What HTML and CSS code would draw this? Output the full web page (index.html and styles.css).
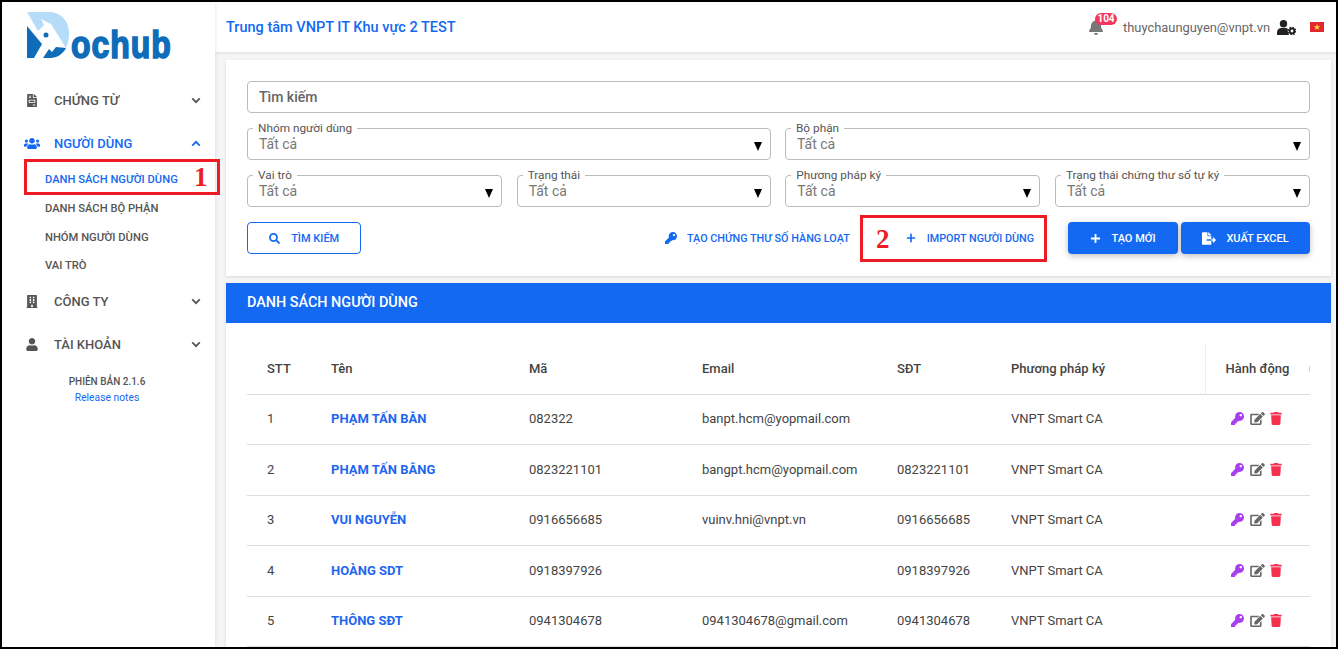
FILE: index.html
```html
<!DOCTYPE html>
<html lang="en">
<head>
  <meta charset="UTF-8" />
  <title>Dochub - Danh sách người dùng</title>
  <link rel="stylesheet" href="styles.css">
</head>
<body>
<svg class="sprite" xmlns="http://www.w3.org/2000/svg">
  <symbol id="i-key" viewBox="0 0 512 512"><path d="M512 176.001C512 273.203 433.202 352 336 352c-11.22 0-22.19-1.062-32.827-3.069l-24.012 27.014A23.999 23.999 0 0 1 261.223 384H224v40c0 13.255-10.745 24-24 24h-40v40c0 13.255-10.745 24-24 24H24c-13.255 0-24-10.745-24-24v-78.059c0-6.365 2.529-12.47 7.029-16.971l161.802-161.802C163.108 213.814 160 195.271 160 176 160 78.798 238.797.001 335.999 0 433.488-.001 512 78.511 512 176.001zM336 128c0 26.51 21.49 48 48 48s48-21.49 48-48-21.49-48-48-48-48 21.49-48 48z"/></symbol>
  <symbol id="i-edit" viewBox="0 0 576 512"><path d="M402.6 83.2l90.2 90.2c3.8 3.8 3.8 10 0 13.8L274.4 405.6l-92.8 10.3c-12.4 1.4-22.9-9.1-21.5-21.5l10.3-92.8L388.8 83.2c3.8-3.8 10-3.8 13.8 0zm162-22.9l-48.8-48.8c-15.2-15.2-39.9-15.2-55.2 0l-35.4 35.4c-3.8 3.8-3.8 10 0 13.8l90.2 90.2c3.8 3.8 10 3.8 13.8 0l35.4-35.4c15.2-15.3 15.2-40 0-55.2zM384 346.2V448H64V128h229.8c3.2 0 6.2-1.3 8.5-3.5l40-40c7.6-7.6 2.2-20.5-8.5-20.5H48C21.5 64 0 85.5 0 112v352c0 26.5 21.5 48 48 48h352c26.5 0 48-21.5 48-48V306.2c0-10.7-12.9-16-20.5-8.5l-40 40c-2.2 2.3-3.5 5.3-3.5 8.5z"/></symbol>
  <symbol id="i-trash" viewBox="0 0 448 512"><path d="M432 32H312l-9.4-18.7A24 24 0 0 0 281.1 0H166.8a23.72 23.72 0 0 0-21.4 13.3L136 32H16A16 16 0 0 0 0 48v32a16 16 0 0 0 16 16h416a16 16 0 0 0 16-16V48a16 16 0 0 0-16-16zM53.2 467a48 48 0 0 0 47.9 45h245.8a48 48 0 0 0 47.9-45L416 128H32z"/></symbol>
  <symbol id="i-chevron" viewBox="0 0 12 8"><path d="M1.5 1.5 6 6l4.5-4.5" fill="none" stroke="currentColor" stroke-width="2.2"/></symbol>
  <symbol id="i-plus" viewBox="0 0 12 12"><path d="M6 1v10M1 6h10" fill="none" stroke="currentColor" stroke-width="2"/></symbol>
</svg>

<div class="frame">
  <aside class="sidebar">
    <div class="logo">
      <svg width="170" height="64" viewBox="24 8 170 64">
        <path fill="#b5dcf8" d="M27 12h22c13 0 20 10 20 21 0 6-1 11-3 15L51 24l-10-5 3 6-6 6z"/>
        <path fill="#0f6cb8" d="M27 26l15 18-8 14h-7z"/>
        <path fill="#0f6cb8" d="M43 58l6-9 3 3 4-5 10 1c-3 6-9 10-16 10z"/>
        <circle cx="46" cy="35" r="2.500" fill="#0f6cb8"/>
        <text class="logo-text" transform="translate(71 58) scale(0.97 1.16)">ochub</text>
      </svg>
    </div>
    <nav class="menu">
      <div class="menu-item">
        <svg class="menu-icon" viewBox="0 0 384 512"><path d="M288 256H96v64h192v-64zm89-151L279.1 7c-4.5-4.5-10.6-7-17-7H256v128h128v-6.1c0-6.3-2.5-12.4-7-16.9zm-153 31V0H24C10.7 0 0 10.7 0 24v464c0 13.3 10.7 24 24 24h336c13.3 0 24-10.7 24-24V160H248c-13.2 0-24-10.8-24-24zM64 72c0-4.42 3.58-8 8-8h80c4.42 0 8 3.58 8 8v16c0 4.42-3.58 8-8 8H72c-4.42 0-8-3.58-8-8V72zm0 64c0-4.42 3.58-8 8-8h80c4.42 0 8 3.58 8 8v16c0 4.42-3.58 8-8 8H72c-4.42 0-8-3.58-8-8v-16zm256 304c0 4.42-3.58 8-8 8h-80c-4.42 0-8-3.58-8-8v-16c0-4.42 3.58-8 8-8h80c4.42 0 8 3.58 8 8v16zm0-200v96c0 8.84-7.16 16-16 16H80c-8.84 0-16-7.16-16-16v-96c0-8.84 7.16-16 16-16h224c8.84 0 16 7.16 16 16z"/></svg>
        <span>CHỨNG TỪ</span>
        <svg class="chevron"><use href="#i-chevron"/></svg>
      </div>
      <div class="menu-item active">
        <svg class="menu-icon" viewBox="0 0 640 512"><path d="M96 224c35.3 0 64-28.7 64-64s-28.7-64-64-64-64 28.700-64 64 28.700 64 64 64zm448 0c35.300 0 64-28.700 64-64s-28.700-64-64-64-64 28.700-64 64 28.700 64 64 64zm32 32h-64c-17.600 0-33.500 7.100-45.100 18.600 40.300 22.100 68.900 62 75.100 109.400h66c17.700 0 32-14.300 32-32v-32c0-35.300-28.700-64-64-64zm-256 0c61.900 0 112-50.100 112-112S381.900 32 320 32 208 82.100 208 144s50.100 112 112 112zm76.800 32h-8.300c-20.800 10-43.900 16-68.500 16s-47.600-6-68.500-16h-8.300C179.600 288 128 339.600 128 403.200V432c0 26.500 21.500 48 48 48h288c26.500 0 48-21.500 48-48v-28.800c0-63.600-51.600-115.200-115.200-115.200zm-223.700-13.400C161.500 263.100 145.600 256 128 256H64c-35.300 0-64 28.700-64 64v32c0 17.700 14.300 32 32 32h65.900c6.300-47.400 34.900-87.300 75.200-109.400z"/></svg>
        <span>NGƯỜI DÙNG</span>
        <svg class="chevron up"><use href="#i-chevron"/></svg>
      </div>
      <div class="sub-menu">
        <a class="sub-item current">DANH SÁCH NGƯỜI DÙNG</a>
        <a class="sub-item">DANH SÁCH BỘ PHẬN</a>
        <a class="sub-item">NHÓM NGƯỜI DÙNG</a>
        <a class="sub-item">VAI TRÒ</a>
      </div>
      <div class="menu-item">
        <svg class="menu-icon" viewBox="0 0 448 512"><path d="M436 480h-20V24c0-13.255-10.745-24-24-24H56C42.745 0 32 10.745 32 24v456H12c-6.627 0-12 5.373-12 12v20h448v-20c0-6.627-5.373-12-12-12zM128 76c0-6.627 5.373-12 12-12h40c6.627 0 12 5.373 12 12v40c0 6.627-5.373 12-12 12h-40c-6.627 0-12-5.373-12-12V76zm0 96c0-6.627 5.373-12 12-12h40c6.627 0 12 5.373 12 12v40c0 6.627-5.373 12-12 12h-40c-6.627 0-12-5.373-12-12v-40zm52 148h-40c-6.627 0-12-5.373-12-12v-40c0-6.627 5.373-12 12-12h40c6.627 0 12 5.373 12 12v40c0 6.627-5.373 12-12 12zm76 160h-64v-84c0-6.627 5.373-12 12-12h40c6.627 0 12 5.373 12 12v84zm64-172c0 6.627-5.373 12-12 12h-40c-6.627 0-12-5.373-12-12v-40c0-6.627 5.373-12 12-12h40c6.627 0 12 5.373 12 12v40zm0-96c0 6.627-5.373 12-12 12h-40c-6.627 0-12-5.373-12-12v-40c0-6.627 5.373-12 12-12h40c6.627 0 12 5.373 12 12v40zm0-96c0 6.627-5.373 12-12 12h-40c-6.627 0-12-5.373-12-12V76c0-6.627 5.373-12 12-12h40c6.627 0 12 5.373 12 12v40z"/></svg>
        <span>CÔNG TY</span>
        <svg class="chevron"><use href="#i-chevron"/></svg>
      </div>
      <div class="menu-item">
        <svg class="menu-icon" viewBox="0 0 448 512"><path d="M224 256c70.700 0 128-57.300 128-128S294.700 0 224 0 96 57.300 96 128s57.300 128 128 128zm89.600 32h-16.700c-22.200 10.200-46.900 16-72.900 16s-50.600-5.800-72.900-16h-16.700C60.200 288 0 348.200 0 422.400V464c0 26.500 21.500 48 48 48h352c26.500 0 48-21.500 48-48v-41.600c0-74.200-60.200-134.400-134.400-134.400z"/></svg>
        <span>TÀI KHOẢN</span>
        <svg class="chevron"><use href="#i-chevron"/></svg>
      </div>
    </nav>
    <div class="version">
      <div>PHIÊN BẢN 2.1.6</div>
      <a>Release notes</a>
    </div>
  </aside>

  <main class="main">
    <header class="topbar">
      <div class="org">Trung tâm VNPT IT Khu vực 2 TEST</div>
      <div class="user-box">
        <div class="bell">
          <svg width="14" height="16" viewBox="0 0 448 512"><path d="M224 512c35.320 0 63.970-28.650 63.970-64H160.030c0 35.350 28.650 64 63.970 64zm215.390-149.710c-19.320-20.760-55.470-51.990-55.470-154.290 0-77.700-54.480-139.900-127.940-155.160V32c0-17.670-14.320-32-31.980-32s-31.980 14.330-31.980 32v20.840C118.560 68.100 64.080 130.300 64.080 208c0 102.300-36.150 133.530-55.470 154.290-6 6.450-8.660 14.160-8.610 21.710.11 16.400 12.980 32 32.100 32h383.800c19.120 0 32-15.600 32.100-32 .05-7.550-2.610-15.270-8.610-21.710z"/></svg>
          <span class="badge">104</span>
        </div>
        <span class="email">thuychaunguyen@vnpt.vn</span>
        <svg class="user-cog" width="19" height="15" viewBox="0 0 19 15">
          <circle cx="6.500" cy="3.800" r="3.700"/>
          <path d="M0 15v-2.500C0 9.700 2 8 4.500 8h4c1 0 1.800.3 2.400.7-.3 1.800 0 4 1.100 6.300z"/>
          <circle cx="15" cy="11" r="2.400" fill="none" stroke="#222" stroke-width="2"/>
          <circle cx="15" cy="11" r="3.700" fill="none" stroke="#222" stroke-width="1.300" stroke-dasharray="1.500 1.400"/>
        </svg>
        <svg class="flag" width="14" height="10" viewBox="0 0 14 10">
          <rect width="14" height="10" fill="#e0282e"/>
          <polygon fill="#ffd83d" points="7,1.800 7.800,4.200 10.300,4.200 8.300,5.700 9,8.100 7,6.600 5,8.100 5.700,5.700 3.700,4.200 6.200,4.200"/>
        </svg>
      </div>
    </header>

    <div class="content">
      <section class="card filter">
        <div class="search-input">Tìm kiếm</div>
        <div class="field-row">
          <fieldset class="field"><legend>Nhóm người dùng</legend><span>Tất cả</span><i class="caret"></i></fieldset>
          <fieldset class="field"><legend>Bộ phận</legend><span>Tất cả</span><i class="caret"></i></fieldset>
        </div>
        <div class="field-row four">
          <fieldset class="field"><legend>Vai trò</legend><span>Tất cả</span><i class="caret"></i></fieldset>
          <fieldset class="field"><legend>Trạng thái</legend><span>Tất cả</span><i class="caret"></i></fieldset>
          <fieldset class="field"><legend>Phương pháp ký</legend><span>Tất cả</span><i class="caret"></i></fieldset>
          <fieldset class="field"><legend>Trạng thái chứng thư số tự ký</legend><span>Tất cả</span><i class="caret"></i></fieldset>
        </div>
        <div class="actions">
          <button class="btn-outline">
            <svg width="11" height="11" viewBox="0 0 512 512"><path d="M505 442.700L405.300 343c-4.500-4.500-10.600-7-17-7H372c27.600-35.300 44-79.700 44-128C416 93.100 322.900 0 208 0S0 93.100 0 208s93.100 208 208 208c48.300 0 92.700-16.400 128-44v16.300c0 6.400 2.500 12.500 7 17l99.700 99.700c9.400 9.400 24.600 9.400 33.900 0l28.300-28.300c9.400-9.400 9.400-24.600.1-34zM208 336c-70.700 0-128-57.200-128-128 0-70.700 57.200-128 128-128 70.700 0 128 57.200 128 128 0 70.700-57.200 128-128 128z"/></svg>
            TÌM KIẾM
          </button>
          <a class="btn-link key-link"><svg width="12" height="12"><use href="#i-key"/></svg>TẠO CHỨNG THƯ SỐ HÀNG LOẠT</a>
          <a class="btn-link import-link"><svg width="10" height="10"><use href="#i-plus"/></svg>IMPORT NGƯỜI DÙNG</a>
          <button class="btn-solid new-btn"><svg width="11" height="11"><use href="#i-plus"/></svg>TẠO MỚI</button>
          <button class="btn-solid">
            <svg width="14" height="13" viewBox="0 0 576 512"><path d="M384 121.900c0-6.300-2.500-12.400-7-16.900L279.100 7c-4.500-4.500-10.600-7-17-7H256v128h128zM571 308l-95.700-96.400c-10.100-10.100-27.400-3-27.400 11.300V288h-64v64h64v65.200c0 14.300 17.300 21.400 27.400 11.300L571 332c6.600-6.600 6.600-17.400 0-24zm-379 28v-32c0-8.800 7.200-16 16-16h176V160H248c-13.200 0-24-10.800-24-24V0H24C10.700 0 0 10.700 0 24v464c0 13.300 10.700 24 24 24h336c13.300 0 24-10.700 24-24V352H208c-8.800 0-16-7.200-16-16z"/></svg>
            XUẤT EXCEL
          </button>
        </div>
      </section>

      <section class="card list">
        <h2 class="list-title">DANH SÁCH NGƯỜI DÙNG</h2>
        <div class="table-wrap">
          <table class="users">
            <colgroup>
              <col class="c-stt"><col class="c-name"><col class="c-code"><col class="c-email"><col class="c-phone"><col class="c-method"><col class="c-action">
            </colgroup>
            <thead>
              <tr><th>STT</th><th>Tên</th><th>Mã</th><th>Email</th><th>SĐT</th><th>Phương pháp ký</th><th class="action-head">Hành động</th></tr>
            </thead>
            <tbody>
              <tr><td>1</td><td class="name">PHẠM TẤN BẰN</td><td>082322</td><td>banpt.hcm@yopmail.com</td><td></td><td>VNPT Smart CA</td><td><div class="row-actions"><svg class="a-key"><use href="#i-key"/></svg><svg class="a-edit"><use href="#i-edit"/></svg><svg class="a-trash"><use href="#i-trash"/></svg></div></td></tr>
              <tr><td>2</td><td class="name">PHẠM TẤN BẰNG</td><td>0823221101</td><td>bangpt.hcm@yopmail.com</td><td>0823221101</td><td>VNPT Smart CA</td><td><div class="row-actions"><svg class="a-key"><use href="#i-key"/></svg><svg class="a-edit"><use href="#i-edit"/></svg><svg class="a-trash"><use href="#i-trash"/></svg></div></td></tr>
              <tr><td>3</td><td class="name">VUI NGUYỄN</td><td>0916656685</td><td>vuinv.hni@vnpt.vn</td><td>0916656685</td><td>VNPT Smart CA</td><td><div class="row-actions"><svg class="a-key"><use href="#i-key"/></svg><svg class="a-edit"><use href="#i-edit"/></svg><svg class="a-trash"><use href="#i-trash"/></svg></div></td></tr>
              <tr><td>4</td><td class="name">HOÀNG SDT</td><td>0918397926</td><td></td><td>0918397926</td><td>VNPT Smart CA</td><td><div class="row-actions"><svg class="a-key"><use href="#i-key"/></svg><svg class="a-edit"><use href="#i-edit"/></svg><svg class="a-trash"><use href="#i-trash"/></svg></div></td></tr>
              <tr><td>5</td><td class="name">THÔNG SĐT</td><td>0941304678</td><td>0941304678@gmail.com</td><td>0941304678</td><td>VNPT Smart CA</td><td><div class="row-actions"><svg class="a-key"><use href="#i-key"/></svg><svg class="a-edit"><use href="#i-edit"/></svg><svg class="a-trash"><use href="#i-trash"/></svg></div></td></tr>
            </tbody>
          </table>
        </div>
      </section>
    </div>
  </main>

  <!-- annotation boxes drawn on top of the screenshot -->
  <div class="mark mark-one"><b>1</b></div>
  <div class="mark mark-two"><b>2</b></div>
</div>
</body>
</html>
```

FILE: styles.css
```css
* {
  box-sizing: border-box;
}

html, body {
  height: 100%;
}

body {
  margin: 0;
  font-family: Roboto, "Liberation Sans", sans-serif;
  background: #fff;
  color: #444;
  overflow: hidden;
}

.sprite {
  display: none;
}

.frame {
  position: relative;
  display: flex;
  width: 1338px;
  height: 649px;
  border: 2px solid #000;
  background: #f4f5f6;
  overflow: hidden;
}

/* sidebar */
.sidebar {
  flex: 0 0 213px;
  background: #fff;
  box-shadow: 0 0 4px rgba(0,0,0,0.12);
  z-index: 2;
}

.logo {
  height: 76px;
  padding: 6px 0 0 22px;
}

.logo svg {
  display: block;
}

.logo-text {
  font-family: "Liberation Sans", sans-serif;
  font-weight: bold;
  font-size: 33px;
  letter-spacing: 1px;
  fill: #0f6cb8;
  stroke: #0f6cb8;
  stroke-width: 1.4px;
}

.menu {
  padding-top: 0.5px;
}

.menu-item {
  display: flex;
  align-items: center;
  height: 43px;
  padding-left: 22px;
  font-size: 13px;
  font-weight: 500;
  color: #555;
}

.menu-item span {
  flex: 1;
}

.menu-icon {
  width: 16px;
  height: 13px;
  margin-right: 14px;
  fill: #555;
}

.chevron {
  width: 10px;
  height: 7px;
  margin-right: 14px;
  color: #555;
}

.chevron.up {
  transform: rotate(180deg);
}

.menu-item.active,
.menu-item.active .chevron {
  color: #1469f2;
}

.menu-item.active .menu-icon {
  fill: #1469f2;
}

.sub-menu {
  padding-top: 1px;
}

.sub-item {
  display: flex;
  align-items: center;
  height: 28.7px;
  padding-left: 43px;
  font-size: 11.2px;
  font-weight: 500;
  color: #555;
}

.sub-item.current {
  color: #1469f2;
}

.version {
  margin-top: 8px;
  padding-right: 3px;
  text-align: center;
  font-size: 10px;
  font-weight: 500;
  line-height: 16px;
  color: #555;
}

.version a {
  display: block;
  font-size: 10.3px;
  font-weight: 400;
  color: #1469f2;
}

/* top bar */
.main {
  flex: 1;
  min-width: 0;
  display: flex;
  flex-direction: column;
}

.topbar {
  flex: 0 0 50px;
  display: flex;
  align-items: center;
  justify-content: space-between;
  padding: 0 12px 0 11px;
  background: #fff;
  box-shadow: 0 1px 3px rgba(0,0,0,0.1);
  z-index: 1;
}

.org {
  font-size: 14.5px;
  font-weight: 500;
  color: #1469f2;
}

.user-box {
  display: flex;
  align-items: center;
}

.bell {
  position: relative;
  width: 14px;
  height: 16px;
  margin-right: 20px;
  fill: #777;
}

.badge {
  position: absolute;
  left: 6px;
  top: -6px;
  width: 22px;
  height: 12px;
  border-radius: 6px;
  background: #f5365c;
  color: #fff;
  font-size: 10px;
  font-weight: 700;
  line-height: 12px;
  text-align: center;
}

.email {
  font-size: 12.9px;
  color: #666;
  margin-right: 7px;
}

.user-cog {
  fill: #222;
  margin-right: 14px;
}

/* filter card */
.content {
  flex: 1;
  min-height: 0;
  padding: 8px 5px 0 11px;
  display: flex;
  flex-direction: column;
  gap: 7px;
}

.card {
  background: #fff;
  box-shadow: 0 1px 3px rgba(0,0,0,0.12);
}

.filter {
  flex: 0 0 216px;
  padding: 21px 21px 0;
}

.search-input {
  height: 32px;
  padding-left: 11px;
  border: 1px solid #bbb;
  border-radius: 4px;
  font-size: 14px;
  font-weight: 500;
  line-height: 30px;
  color: #666;
}

.field-row {
  display: grid;
  grid-template-columns: 524px 525px;
  column-gap: 14px;
  margin-top: 8px;
}

.field-row.four {
  grid-template-columns: 255px 254px 255px 255px;
  column-gap: 14.67px;
}

.field {
  position: relative;
  min-width: 0;
  height: 39px;
  margin: 0;
  padding: 1px 0 0 11px;
  border: 1px solid #bbb;
  border-radius: 4px;
  font-size: 14px;
  line-height: 17px;
  color: #777;
}

.field legend {
  margin-left: -6px;
  padding: 0 5px;
  font-size: 11.8px;
  line-height: 14px;
  color: #555;
}

.caret {
  position: absolute;
  right: 8px;
  top: 7px;
  border-left: 4px solid transparent;
  border-right: 4px solid transparent;
  border-top: 9px solid #000;
}

.actions {
  display: flex;
  align-items: center;
  margin-top: 15px;
  height: 32px;
}

.actions button {
  display: flex;
  align-items: center;
  justify-content: center;
  height: 32px;
  font-family: inherit;
  font-size: 11px;
  font-weight: 500;
}

.btn-outline {
  width: 114.4px;
  gap: 11px;
  background: #fff;
  border: 1px solid #1469f2;
  border-radius: 4px;
  color: #1469f2;
  fill: #1469f2;
}

.btn-link {
  display: flex;
  align-items: center;
  font-size: 10.8px;
  font-weight: 500;
  color: #1469f2;
  fill: #1469f2;
  white-space: nowrap;
}

.key-link {
  margin-left: 303.6px;
  gap: 10px;
}

.import-link {
  margin-left: 56px;
  gap: 11px;
}

.btn-solid {
  width: 129px;
  gap: 10px;
  border: none;
  border-radius: 4px;
  background: #1469f2;
  color: #fff;
  fill: #fff;
  box-shadow: 0 2px 6px rgba(0,0,0,0.25);
}

.new-btn {
  width: 110px;
  margin: 0 3px 0 auto;
}

/* user list */
.list {
  flex: 1;
  min-height: 0;
  overflow: hidden;
}

.list-title {
  margin: 0;
  height: 40px;
  padding-left: 21px;
  background: #1469f2;
  color: #fff;
  font-size: 14.4px;
  font-weight: 500;
  line-height: 40px;
}

.table-wrap {
  padding: 21px 21px 0;
}

.users {
  width: 1063px;
  table-layout: fixed;
  border-collapse: collapse;
  font-size: 13px;
  color: #444;
}

.c-stt { width: 64px; }
.c-name { width: 198px; }
.c-code { width: 173px; }
.c-email { width: 195px; }
.c-phone { width: 114px; }
.c-method { width: 214px; }
.c-action { width: 105px; }

.users th,
.users td {
  padding: 0 0 0 20px;
  text-align: left;
  border-bottom: 1px solid #ddd;
  white-space: nowrap;
}

.users th {
  height: 50px;
  padding-bottom: 1px;
  font-weight: 500;
  color: #444;
}

.users td {
  height: 50.5px;
  padding-bottom: 1px;
}

.users .action-head {
  position: relative;
  border-left: 1px solid #eee;
}

.action-head::after {
  content: "";
  position: absolute;
  right: 0;
  top: 22px;
  width: 1px;
  height: 6px;
  background: #b5dcf8;
}

.users .name {
  font-weight: 700;
  color: #1f66ef;
}

.row-actions {
  display: flex;
  align-items: center;
  gap: 5px;
  padding-left: 6px;
}

.row-actions svg {
  height: 13px;
}

.a-key {
  width: 13px;
  margin-right: 1px;
  fill: #a93df0;
}

.a-edit {
  width: 15px;
  fill: #666;
}

.a-trash {
  width: 12px;
  fill: #f5304f;
}

/* red annotation boxes */
.mark {
  position: absolute;
  border: 3px solid #ed1c24;
  z-index: 3;
}

.mark b {
  position: absolute;
  font-family: "Liberation Serif", serif;
  font-size: 27px;
  line-height: 30px;
  color: #ed1c24;
}

.mark-one {
  left: 22px;
  top: 157px;
  width: 196px;
  height: 36px;
}

.mark-one b {
  left: 167px;
  top: 0;
}

.mark-two {
  left: 858px;
  top: 213px;
  width: 187px;
  height: 47px;
}

.mark-two b {
  left: 13px;
  top: 6px;
}
```
